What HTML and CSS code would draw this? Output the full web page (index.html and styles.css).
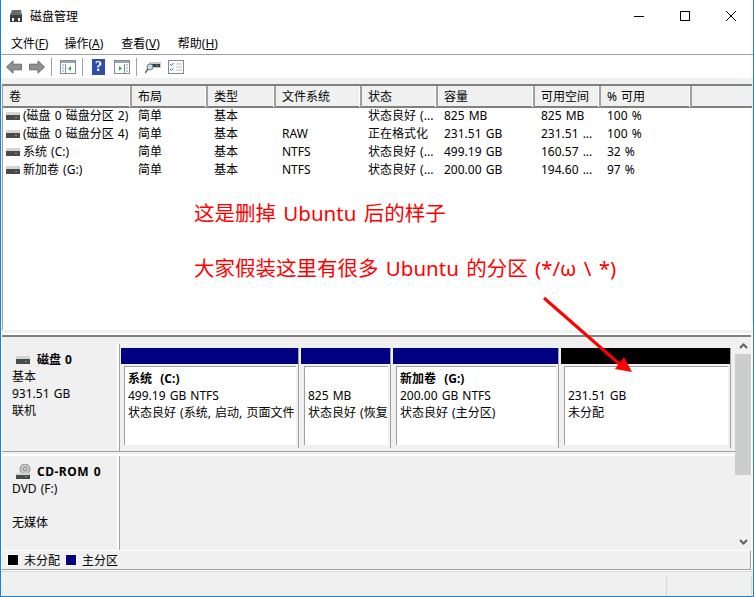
FILE: index.html
```html
<!DOCTYPE html>
<html lang="zh-CN">
<head>
    <meta charset="UTF-8">
    <title>磁盘管理</title>
    <link rel="stylesheet" href="styles.css">
</head>
<body>
    <svg class="defs" width="0" height="0">
        <symbol id="drive" viewBox="0 0 14 8">
            <rect x="0" y="0" width="14" height="3" fill="#d4d4d4"/>
            <rect x="0" y="3" width="14" height="5" fill="#4a4a4a"/>
            <rect x="9" y="5" width="2" height="1" fill="#35d04a"/>
        </symbol>
    </svg>
    <div class="window">
        <div class="titlebar">
            <svg class="app-icon" width="14" height="14" viewBox="0 0 14 14">
                <path d="M3 1h9l1 5H1z" fill="#6a6a6a"/>
                <rect x="1" y="6" width="12" height="7" fill="#3d3d3d"/>
                <rect x="3" y="9" width="2" height="3" fill="#fff"/>
                <rect x="9" y="9" width="2" height="3" fill="#fff"/>
                <rect x="10" y="3" width="2" height="1" fill="#35d04a"/>
            </svg>
            <span class="title">磁盘管理</span>
            <div class="caption-btns">
                <svg width="12" height="12" viewBox="0 0 12 12"><path d="M1 6.5h10" stroke="#000"/></svg>
                <svg width="12" height="12" viewBox="0 0 12 12"><rect x="1.5" y="1.5" width="9" height="9" fill="none" stroke="#000"/></svg>
                <svg width="12" height="12" viewBox="0 0 12 12"><path d="M1 1l10 10M11 1L1 11" stroke="#000"/></svg>
            </div>
        </div>
        <div class="menubar">
            <span>文件(<u>F</u>)</span>
            <span>操作(<u>A</u>)</span>
            <span>查看(<u>V</u>)</span>
            <span>帮助(<u>H</u>)</span>
        </div>
        <div class="toolbar">
            <svg class="tool-back" width="16" height="14" viewBox="0 0 16 14"><path d="M.5 7L7 .8v3.4h8.5v5.6H7v3.4z" fill="#8f8f8f" stroke="#6b6b6b"/></svg>
            <svg class="tool-fwd" width="16" height="14" viewBox="0 0 16 14"><path d="M15.5 7L9 .8v3.4H.5v5.6H9v3.4z" fill="#8f8f8f" stroke="#6b6b6b"/></svg>
            <i class="tool-sep"></i>
            <svg class="tool-pane" width="16" height="14" viewBox="0 0 16 14">
                <rect x=".5" y=".5" width="15" height="13" fill="#fff" stroke="#7f8c96"/>
                <rect x="1" y="1" width="14" height="2" fill="#9aa7b1"/>
                <path d="M5.5 4v9" stroke="#7f8c96"/>
                <path d="M2 5h2M2 8h2M2 11h2" stroke="#7f9cb5"/>
                <path d="M11 6v5L8 8.500z" fill="#2fae4a"/>
            </svg>
            <i class="tool-sep"></i>
            <span class="tool-help">?</span>
            <svg class="tool-pane" width="16" height="14" viewBox="0 0 16 14">
                <rect x=".5" y=".5" width="15" height="13" fill="#fff" stroke="#7f8c96"/>
                <rect x="1" y="1" width="14" height="2" fill="#9aa7b1"/>
                <path d="M10.500 4v9" stroke="#7f8c96"/>
                <path d="M12 5h2M12 8h2M12 11h2" stroke="#7f9cb5"/>
                <path d="M5 6v5l3-2.500z" fill="#2fae4a"/>
            </svg>
            <i class="tool-sep"></i>
            <svg class="tool-find" width="16" height="14" viewBox="0 0 16 14">
                <rect x="4" y="2" width="12" height="6" fill="#c9c9c9"/>
                <rect x="6" y="4" width="9" height="3" fill="#3d3d3d"/>
                <rect x="11" y="5" width="2" height="1" fill="#35d04a"/>
                <circle cx="5" cy="7" r="3" fill="#bfe0f2" stroke="#6a7f8c"/>
                <path d="M3 9l-3 4" stroke="#8a5a32" stroke-width="1.500"/>
            </svg>
            <svg class="tool-check" width="16" height="14" viewBox="0 0 16 14">
                <rect x=".5" y=".5" width="15" height="13" fill="#fff" stroke="#7f8c96"/>
                <path d="M2 4l1.500 1.500L5.500 3M2 9l1.500 1.500L5.500 8" stroke="#2f7fd0" fill="none"/>
                <path d="M8 4h6M8 7h6M8 10h6" stroke="#b5bcc2"/>
            </svg>
        </div>

        <div class="volumes">
            <div class="vol-head vol-grid">
                <span>卷</span><span>布局</span><span>类型</span><span>文件系统</span><span>状态</span><span>容量</span><span>可用空间</span><span>% 可用</span><span></span>
            </div>
            <div class="vol-row vol-grid">
                <span><svg class="drive-sm"><use href="#drive"/></svg>(磁盘 0 磁盘分区 2)</span><span>简单</span><span>基本</span><span></span><span>状态良好 (...</span><span>825 MB</span><span>825 MB</span><span>100 %</span>
            </div>
            <div class="vol-row vol-grid">
                <span><svg class="drive-sm"><use href="#drive"/></svg>(磁盘 0 磁盘分区 4)</span><span>简单</span><span>基本</span><span>RAW</span><span>正在格式化</span><span>231.51 GB</span><span>231.51 ...</span><span>100 %</span>
            </div>
            <div class="vol-row vol-grid">
                <span><svg class="drive-sm"><use href="#drive"/></svg>系统 (C:)</span><span>简单</span><span>基本</span><span>NTFS</span><span>状态良好 (...</span><span>499.19 GB</span><span>160.57 ...</span><span>32 %</span>
            </div>
            <div class="vol-row vol-grid">
                <span><svg class="drive-sm"><use href="#drive"/></svg>新加卷 (G:)</span><span>简单</span><span>基本</span><span>NTFS</span><span>状态良好 (...</span><span>200.00 GB</span><span>194.60 ...</span><span>97 %</span>
            </div>
        </div>

        <div class="disks-pane">
            <div class="disks">
                <div class="disk disk-hdd">
                    <div class="disk-label">
                        <div class="disk-name"><svg class="drive-sm"><use href="#drive"/></svg><b>磁盘 0</b></div>
                        <div>基本</div>
                        <div>931.51 GB</div>
                        <div>联机</div>
                    </div>
                    <div class="partitions">
                        <div class="part part-c">
                            <div class="part-bar"></div>
                            <div class="part-body">
                                <b>系统 &nbsp;(C:)</b>
                                <div>499.19 GB NTFS</div>
                                <div>状态良好 (系统, 启动, 页面文件</div>
                            </div>
                        </div>
                        <div class="part part-r">
                            <div class="part-bar"></div>
                            <div class="part-body">
                                <b>&nbsp;</b>
                                <div>825 MB</div>
                                <div>状态良好 (恢复</div>
                            </div>
                        </div>
                        <div class="part part-g">
                            <div class="part-bar"></div>
                            <div class="part-body">
                                <b>新加卷 &nbsp;(G:)</b>
                                <div>200.00 GB NTFS</div>
                                <div>状态良好 (主分区)</div>
                            </div>
                        </div>
                        <div class="part part-free">
                            <div class="part-bar"></div>
                            <div class="part-body">
                                <b>&nbsp;</b>
                                <div>231.51 GB</div>
                                <div>未分配</div>
                            </div>
                        </div>
                    </div>
                </div>
                <div class="disk disk-cd">
                    <div class="disk-label">
                        <div class="disk-name">
                            <svg class="cd-icon" width="15" height="15" viewBox="0 0 15 15">
                                <circle cx="9" cy="5" r="5" fill="#c4c4c4" stroke="#8c8c8c"/>
                                <circle cx="9" cy="5" r="1.500" fill="#fff" stroke="#777"/>
                                <rect x="0" y="9" width="14" height="2" fill="#d4d4d4"/>
                                <rect x="0" y="11" width="14" height="4" fill="#4a4a4a"/>
                                <rect x="9" y="12" width="2" height="1" fill="#35d04a"/>
                            </svg>
                            <b>CD-ROM 0</b>
                        </div>
                        <div>DVD (F:)</div>
                        <div>&nbsp;</div>
                        <div>无媒体</div>
                    </div>
                    <div class="cd-empty"></div>
                </div>
            </div>
            <div class="scrollbar">
                <div class="scroll-btn"><svg width="9" height="6" viewBox="0 0 9 6"><path d="M1 5l3.500-3.500L8 5" fill="none" stroke="#606060" stroke-width="2"/></svg></div>
                <div class="scroll-thumb"></div>
                <div class="scroll-btn scroll-down"><svg width="9" height="6" viewBox="0 0 9 6"><path d="M1 1l3.500 3.500L8 1" fill="none" stroke="#606060" stroke-width="2"/></svg></div>
            </div>
        </div>
        <div class="legend">
            <i class="swatch swatch-free"></i><span>未分配</span>
            <i class="swatch swatch-primary"></i><span>主分区</span>
        </div>
        <div class="statusbar">
            <i></i><i></i>
        </div>

        <!-- red notes drawn on top of the screenshot -->
        <div class="note note-one">这是删掉 Ubuntu 后的样子</div>
        <div class="note note-two">大家假装这里有很多 Ubuntu 的分区 (*/ω \ *)</div>
        <svg class="note-arrow" width="100" height="84" viewBox="0 0 100 84">
            <path d="M2 2L82 72" stroke="#f00" stroke-width="3"/>
            <path d="M90 76L73 73L82 61z" fill="#f00"/>
        </svg>
    </div>
</body>
</html>
```

FILE: styles.css
```css
* {
    box-sizing: border-box;
}
body {
    margin: 0;
    font-family: "Noto Sans", "Noto Sans CJK SC", sans-serif;
    font-size: 12px;
    word-spacing: 1px;
    color: #000;
}
b {
    font-weight: 700;
}
.defs {
    position: absolute;
}
.window {
    position: relative;
    width: 754px;
    height: 597px;
    display: flex;
    flex-direction: column;
    background: #fff;
    border: 1px solid #1883d7;
    border-top: 0;
    overflow: hidden;
}

/* title + menu */
.titlebar {
    height: 32px;
    display: flex;
    align-items: center;
    padding-left: 8px;
}
.title {
    margin-left: 7px;
}
.caption-btns {
    margin-left: auto;
    display: flex;
    gap: 34px;
    padding-right: 16px;
}
.menubar {
    height: 22px;
    display: flex;
    gap: 16px;
    align-items: center;
    padding-left: 10px;
    padding-bottom: 1px;
}
.menubar span:nth-child(n+3) {
    margin-left: 2px;
}
.menubar u {
    text-decoration-thickness: 1px;
}
.toolbar {
    height: 24px;
    display: flex;
    align-items: center;
    padding-left: 5px;
    border-top: 1px solid #a0a0a0;
}
.toolbar svg {
    flex: none;
}
.tool-fwd {
    margin-left: 7px;
}
.tool-sep {
    width: 1px;
    height: 18px;
    background: #a0a0a0;
    margin: 0 8px 0 6px;
}
.tool-help {
    width: 13px;
    height: 16px;
    margin: 0 9px 0 1px;
    background: #2d4fa8;
    color: #fff;
    font: bold 14px/16px "Liberation Serif", serif;
    text-align: center;
}
.tool-check {
    margin-left: 7px;
}

/* upper list */
.volumes {
    height: 246px;
    margin: 6px 1px 0;
    background: #fff;
    border-left: 1px solid #a0a0a0;
    border-top: 2px solid #808080;
    flex: none;
    box-shadow: -1px -6px 0 #f0f0f0, 1px -6px 0 #f0f0f0, 0 3px 0 #f0f0f0;
}
.vol-grid {
    display: grid;
    grid-template-columns: 129px 76px 68px 86px 76px 97px 66px 91px 1fr;
}
.vol-head {
    height: 22px;
    background: #f0f0f0;
    border-bottom: 2px solid #808080;
}
.vol-head span {
    padding-left: 6px;
    line-height: 21px;
    border-right: 2px solid #a0a0a0;
    box-shadow: inset -1px 0 0 #fff;
}
.vol-head span:last-child {
    border-right: 0;
    box-shadow: none;
}
.vol-row {
    height: 18px;
    line-height: 16px;
}
.vol-row span {
    padding-left: 6px;
    white-space: nowrap;
    overflow: hidden;
}
.vol-row span:first-child {
    padding-left: 3px;
    display: flex;
    align-items: center;
    height: 16px;
}
.drive-sm {
    width: 14px;
    height: 8px;
    flex: none;
    margin-right: 3px;
}

/* lower graphical view */
.disks-pane {
    height: 215px;
    margin: 5px 2px 0 1px;
    display: flex;
    background: #f0f0f0;
    border-top: 2px solid #808080;
    flex: none;
}
.disks {
    flex: 1;
    padding-top: 7px;
    display: flex;
    flex-direction: column;
    min-width: 0;
}
.disk {
    display: flex;
}
.disk-hdd {
    height: 108px;
    border-bottom: 1px solid #a0a0a0;
}
.disk-cd {
    flex: 1;
    margin-top: 2px;
    border-top: 2px solid #fff;
}
.disk-label {
    width: 117px;
    flex: none;
    padding: 7px 0 0 10px;
    line-height: 17px;
    border-right: 2px solid #fff;
}
.disk-name {
    display: flex;
    align-items: center;
    margin-left: 4px;
    height: 17px;
}
.disk-name b {
    margin-left: 4px;
}
.cd-icon {
    margin-right: 2px;
}
.disk-cd b {
    letter-spacing: 0.5px;
}
.partitions {
    flex: 1;
    display: flex;
    gap: 2px;
    padding: 4px 4px 0 1px;
    border-left: 1px solid #a0a0a0;
}
.cd-empty {
    flex: 1;
    border-left: 1px solid #a0a0a0;
}
.part {
    display: flex;
    flex-direction: column;
    height: 100px;
    border-right: 1px solid #a0a0a0;
}
.part-c {
    width: 178px;
}
.part-r {
    width: 90px;
}
.part-g {
    width: 166px;
}
.part-free {
    width: 170px;
}
.part-bar {
    height: 16px;
    background: #000080;
    flex: none;
}
.part-free .part-bar {
    background: #000;
}
.part-body {
    margin: 2px 2px 3px 3px;
    flex: 1;
    padding: 3px 0 0 3px;
    background: #fff;
    border: 1px solid #a0a0a0;
    border-width: 1px 0 0 1px;
    line-height: 17px;
    white-space: nowrap;
    overflow: hidden;
}
.scrollbar {
    width: 16px;
    flex: none;
    display: flex;
    flex-direction: column;
}
.scroll-btn {
    height: 17px;
    display: flex;
    align-items: center;
    justify-content: center;
}
.scroll-thumb {
    height: 121px;
    background: #cdcdcd;
}
.scroll-down {
    margin-top: auto;
}
.legend {
    height: 20px;
    margin: 0 2px 0 1px;
    display: flex;
    align-items: center;
    padding-left: 5px;
    background: #f0f0f0;
    border-top: 1px solid #fff;
    border-bottom: 1px solid #a0a0a0;
    border-right: 1px solid #a0a0a0;
}
.swatch {
    width: 12px;
    height: 12px;
    margin-right: 5px;
    border: 1px solid #fff;
}
.swatch-free {
    background: #000;
}
.swatch-primary {
    background: #000080;
    margin-left: 5px;
}
.statusbar {
    flex: 1;
    display: flex;
    justify-content: flex-end;
    gap: 84px;
    margin-top: 1px;
    padding: 4px 1px 1px 0;
    background: #f0f0f0;
    border-top: 1px solid #dcdcdc;
}
.statusbar i {
    width: 1px;
    background: #d8d8d8;
}

/* annotations over the screenshot */
.note {
    position: absolute;
    left: 193px;
    color: #f00;
    font-size: 20.5px;
    word-spacing: 2px;
    line-height: 28px;
    white-space: nowrap;
}
.note-one {
    top: 199px;
}
.note-two {
    top: 254px;
}
.note-arrow {
    position: absolute;
    left: 541px;
    top: 296px;
}
```
